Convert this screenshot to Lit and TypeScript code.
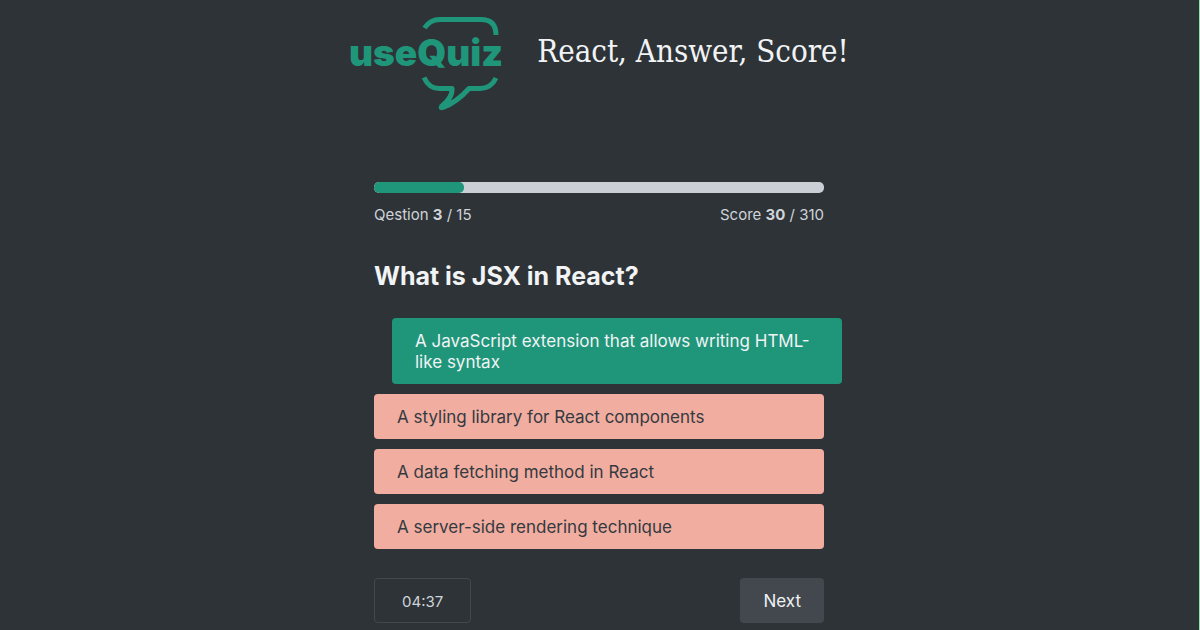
import { LitElement, html, css } from "lit";
import { customElement, property, state } from "lit/decorators.js";
import { classMap } from "lit/directives/class-map.js";

@customElement("quiz-header")
class QuizHeader extends LitElement {
  static styles = css`
    :host { display: block; }
    header {
      display: flex;
      justify-content: center;
      align-items: flex-start;
      gap: 34px;
      padding-top: 12px;
    }
    .logo { display: block; width: 154px; height: 100px; flex: none; overflow: visible; }
    .bubble { fill: none; stroke: #1f967a; stroke-width: 5; stroke-linejoin: round; }
    .word { fill: #1f967a; font-family: Inter, "Open Sans", sans-serif; font-weight: 900; font-size: 37px; }
    h1 {
      margin: 0;
      padding-top: 16px;
      color: #f1f3f5;
      font-family: "Roboto Slab", "DejaVu Serif Condensed", "DejaVu Serif", serif;
      font-weight: 300;
      font-size: 31px;
      line-height: 46px;
      white-space: nowrap;
    }
  `;

  render() {
    return html`
      <header>
        <svg class="logo" viewBox="0 0 154 100" role="img" aria-label="useQuiz">
          <path class="bubble" d="M75.500 16 Q81 7.500 91 7.500 H132 Q147 7.500 147 23" />
          <path class="bubble" d="M75 65.500 Q80 76.500 90 76.500 H103 C103.500 84 99 89 92.500 94.500 Q91.500 96.500 94 95.500 Q108 90 120 76.500 H131 Q142 76.500 147 66" />
          <text class="word" x="0" y="54">useQuiz</text>
        </svg>
        <h1>React, Answer, Score!</h1>
      </header>
    `;
  }
}

@customElement("app-root")
class AppRoot extends LitElement {
  static styles = css`
    :host {
      display: block;
      box-sizing: border-box;
      min-height: 100vh;
      background: #2e3337;
      border-right: 1px solid #8ce6b0;
      padding-right: 1px;
      color: #ced4da;
      font-family: Inter, Roboto, sans-serif;
    }
    main {
      width: 450px;
      max-width: 90%;
      margin: 70px auto 0;
      padding-bottom: 7px;
    }
    .track { height: 11px; border-radius: 5px; background: #c9cfd4; overflow: hidden; }
    .fill { height: 100%; border-radius: 5px; background: #1f967a; }
    .stats {
      display: flex;
      justify-content: space-between;
      margin-top: 12px;
      font-size: 15px;
      line-height: 20px;
    }
    .stats p { margin: 0; }
    h2 {
      margin: 36px 0 27px;
      color: #f1f3f5;
      font-size: 25px;
      line-height: 30px;
      font-weight: 700;
    }
    .options { display: grid; gap: 10px; }
    button { font: inherit; border: 0; border-radius: 4px; cursor: pointer; }
    .option {
      padding: 13px 23px 11px;
      background: #f1ada0;
      color: #343a40;
      font-size: 17px;
      line-height: 21px;
      text-align: left;
    }
    .correct { margin: 0 -18px 0 18px; background: #1f967a; color: #f1f3f5; }
    footer { display: flex; justify-content: space-between; margin-top: 29px; }
    .timer {
      padding: 12px 27px 10px;
      border: 1px solid #42484d;
      border-radius: 4px;
      font-size: 15px;
      line-height: 21px;
    }
    .next {
      padding: 13px 23px 11px;
      background: #42484d;
      color: #f1f3f5;
      font-size: 17px;
      line-height: 21px;
    }
  `;

  @property({ type: Number }) total = 15;
  @property({ type: Number }) maxScore = 310;
  @state() private current = 3;
  @state() private score = 30;

  private question = {
    title: "What is JSX in React?",
    options: [
      "A JavaScript extension that allows writing HTML-like syntax",
      "A styling library for React components",
      "A data fetching method in React",
      "A server-side rendering technique",
    ],
    correct: 0,
  };

  render() {
    const { title, options, correct } = this.question;
    return html`
      <quiz-header></quiz-header>
      <main>
        <div class="track" role="progressbar" aria-label="Quiz progress" aria-valuemin="0"
          aria-valuemax=${this.total} aria-valuenow=${this.current}>
          <div class="fill" style="width:${(this.current / this.total) * 100}%"></div>
        </div>
        <div class="stats">
          <p>Qestion <strong>${this.current}</strong> / ${this.total}</p>
          <p>Score <strong>${this.score}</strong> / ${this.maxScore}</p>
        </div>
        <h2>${title}</h2>
        <div class="options">
          ${options.map((text, i) => html`
            <button type="button" class=${classMap({ option: true, correct: i === correct })}>${text}</button>
          `)}
        </div>
        <footer>
          <div class="timer" role="timer">04:37</div>
          <button type="button" class="next">Next</button>
        </footer>
      </main>
    `;
  }
}
